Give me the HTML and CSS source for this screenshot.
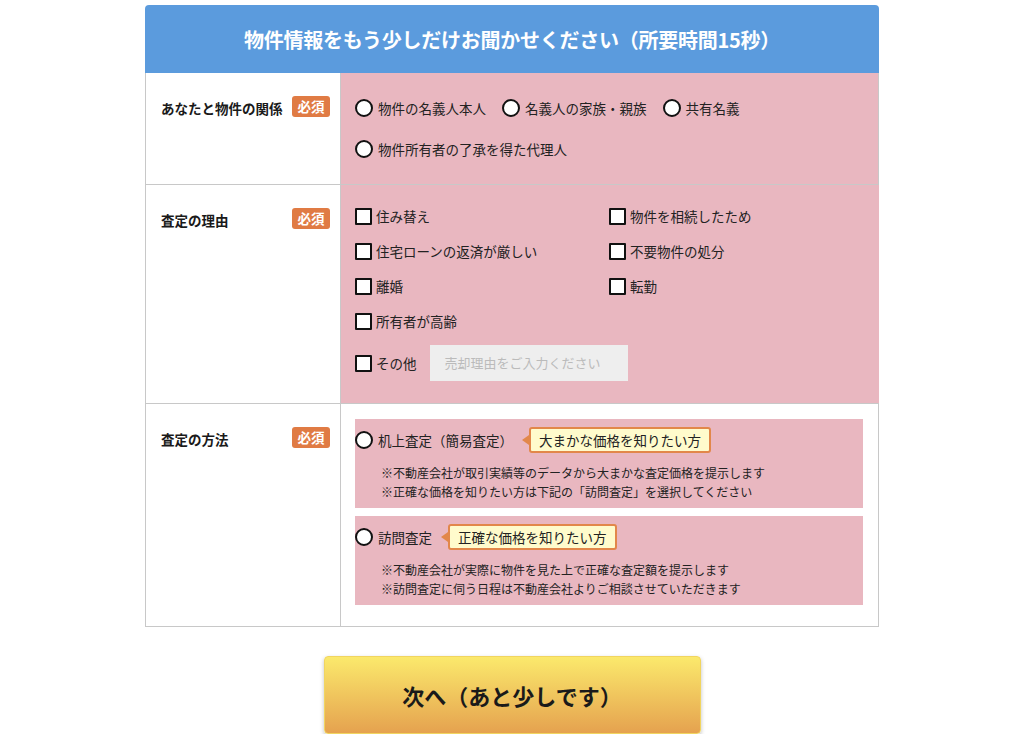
FILE: index.html
```html
<!DOCTYPE html>
<html lang="ja">
<head>
<meta charset="utf-8">
<title>物件情報</title>
<link rel="stylesheet" href="styles.css">
</head>
<body>
<div class="form">
  <div class="head">物件情報をもう少しだけお聞かせください（所要時間15秒）</div>
  <div class="table">
    <div class="row">
      <div class="lab"><span class="lab-text">あなたと物件の関係</span><span class="req">必須</span></div>
      <div class="val pink">
        <div class="radios">
          <label class="opt"><span class="radio"></span>物件の名義人本人</label>
          <label class="opt"><span class="radio"></span>名義人の家族・親族</label>
          <label class="opt"><span class="radio"></span>共有名義</label>
          <label class="opt"><span class="radio"></span>物件所有者の了承を得た代理人</label>
        </div>
      </div>
    </div>
    <div class="row">
      <div class="lab"><span class="lab-text">査定の理由</span><span class="req">必須</span></div>
      <div class="val pink reasons">
        <div class="checks">
          <label class="opt"><span class="check"></span>住み替え</label>
          <label class="opt"><span class="check"></span>物件を相続したため</label>
          <label class="opt"><span class="check"></span>住宅ローンの返済が厳しい</label>
          <label class="opt"><span class="check"></span>不要物件の処分</label>
          <label class="opt"><span class="check"></span>離婚</label>
          <label class="opt"><span class="check"></span>転勤</label>
          <label class="opt"><span class="check"></span>所有者が高齢</label>
        </div>
        <div class="other">
          <label class="opt"><span class="check"></span>その他</label>
          <div class="input">売却理由をご入力ください</div>
        </div>
      </div>
    </div>
    <div class="row">
      <div class="lab"><span class="lab-text">査定の方法</span><span class="req">必須</span></div>
      <div class="val methods">
        <div class="method">
          <div class="method-top">
            <label class="opt"><span class="radio"></span>机上査定（簡易査定）</label>
            <span class="tip">大まかな価格を知りたい方</span>
          </div>
          <p class="note">※不動産会社が取引実績等のデータから大まかな査定価格を提示します<br>※正確な価格を知りたい方は下記の「訪問査定」を選択してください</p>
        </div>
        <div class="method">
          <div class="method-top">
            <label class="opt"><span class="radio"></span>訪問査定</label>
            <span class="tip">正確な価格を知りたい方</span>
          </div>
          <p class="note">※不動産会社が実際に物件を見た上で正確な査定額を提示します<br>※訪問査定に伺う日程は不動産会社よりご相談させていただきます</p>
        </div>
      </div>
    </div>
  </div>
  <div class="actions">
    <button class="next" type="button">次へ（あと少しです）</button>
  </div>
</div>
</body>
</html>
```
FILE: styles.css
```css
* { box-sizing: border-box; }
html, body { margin: 0; padding: 0; background: #fff; }
body {
  font-family: "Noto Sans CJK JP", "Noto Sans", sans-serif;
  color: #222;
  font-size: 13.5px;
}
.form {
  width: 734px;
  margin: 5px auto 0;
}
.head {
  height: 68px;
  background: #5b9bdd;
  color: #fff;
  font-weight: bold;
  font-size: 20px;
  border-radius: 4px 4px 0 0;
  display: flex;
  align-items: center;
  justify-content: center;
  letter-spacing: -0.25px;
}
.table {
  border: 1px solid #c8c8c8;
  border-top: none;
}
.row {
  display: flex;
  border-top: 1px solid #c8c8c8;
}
.row:first-child { border-top: none; }
.lab {
  width: 195px;
  flex: none;
  display: flex;
  justify-content: space-between;
  align-items: flex-start;
  padding: 23px 10px 0 15px;
  border-right: 1px solid #c8c8c8;
}
.lab-text {
  font-weight: bold;
  font-size: 13.5px;
  line-height: 22px;
  margin-top: 1px;
  color: #1a1a1a;
}
.req {
  background: #e07b44;
  color: #fff;
  font-weight: bold;
  font-size: 13.5px;
  width: 38px;
  height: 21px;
  line-height: 21px;
  text-align: center;
  border-radius: 3px;
}
.val { flex: 1; }
.pink { background: #e9b7c0; }

.opt {
  display: inline-flex;
  align-items: center;
  height: 20px;
  line-height: 20px;
  color: #222;
  white-space: nowrap;
}
.radio {
  width: 18px;
  height: 18px;
  border: 2px solid #111;
  border-radius: 50%;
  background: #fff;
  margin-right: 5px;
  margin-left: -1px;
  flex: none;
}
.check {
  width: 17px;
  height: 17px;
  border: 2px solid #111;
  border-radius: 1px;
  background: #fff;
  margin-right: 4px;
  margin-left: -1px;
  flex: none;
}

.radios {
  display: flex;
  flex-wrap: wrap;
  column-gap: 17px;
  row-gap: 21px;
  padding: 25px 15px 25px 15px;
  width: 430px;
}

.reasons { padding: 21px 15px 22px 15px; }
.checks {
  display: grid;
  grid-template-columns: 254px 254px;
  row-gap: 15px;
}
.other {
  display: flex;
  align-items: center;
  margin-top: 14px;
}
.input {
  margin-left: 13px;
  width: 198px;
  height: 36px;
  background: #eeeeee;
  color: #bbbbbb;
  font-size: 13px;
  line-height: 36px;
  padding-left: 15px;
}

.methods {
  padding: 15px 15px 21px 14px;
  display: flex;
  flex-direction: column;
  gap: 8px;
}
.method {
  background: #e9b7c0;
  height: 89px;
  padding-top: 8px;
}
.method .radio { margin-left: 0; }
.method-top {
  display: flex;
  align-items: center;
  height: 26px;
}
.tip {
  position: relative;
  margin-left: 16px;
  height: 26px;
  line-height: 22px;
  padding: 0 8px;
  background: #fffbcc;
  border: 2px solid #e2874a;
  border-radius: 3px;
  color: #222;
  white-space: nowrap;
}
.tip::before {
  content: "";
  position: absolute;
  left: -9px;
  top: 6px;
  border-style: solid;
  border-width: 5px 7px 5px 0;
  border-color: transparent #e2874a transparent transparent;
}
.note {
  margin: 10px 0 0 26px;
  font-size: 12px;
  line-height: 19px;
  color: #222;
}

.actions {
  display: flex;
  justify-content: center;
  padding-top: 29px;
}
.next {
  width: 377px;
  height: 78px;
  border: 1px solid #f1d560;
  border-radius: 4px;
  background: linear-gradient(to bottom, #fbe96c, #e5a24f);
  box-shadow: 0 2px 4px rgba(0,0,0,0.25);
  font-family: "Noto Sans CJK JP", "Noto Sans", sans-serif;
  font-weight: bold;
  font-size: 22px;
  color: #1a1a1a;
  cursor: pointer;
}
```
